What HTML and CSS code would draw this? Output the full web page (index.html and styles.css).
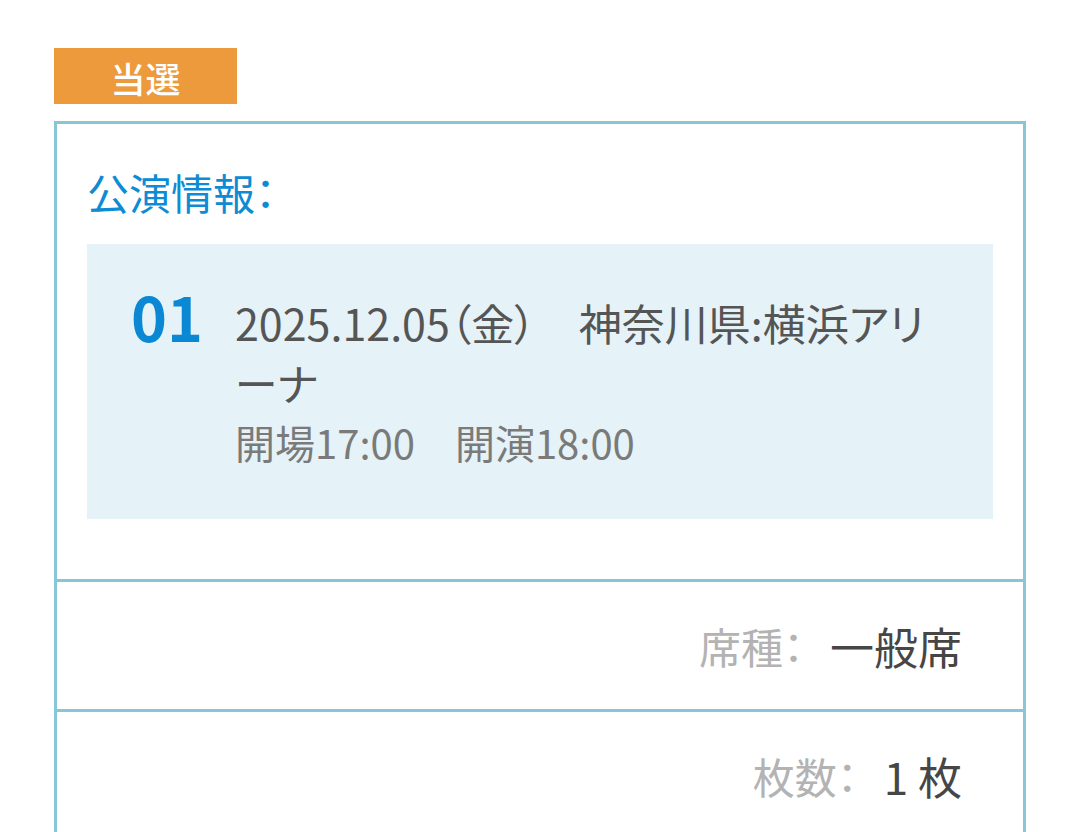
FILE: index.html
```html
<!DOCTYPE html>
<html lang="ja">
<head>
<meta charset="utf-8">
<link rel="stylesheet" href="styles.css">
</head>
<body>
<div class="page">
  <div class="badge">当選</div>
  <div class="card">
    <div class="card-head">
      <h2 class="heading">公演情報：</h2>
      <div class="perf">
        <div class="perf-num">01</div>
        <div class="perf-body">
          <div class="perf-title">2025.12.05（金）　神奈川県:横浜アリーナ</div>
          <div class="perf-time">開場17:00　開演18:00</div>
        </div>
      </div>
    </div>
    <div class="row">
      <span class="row-label">席種：</span>
      <span class="row-value">一般席</span>
    </div>
    <div class="row">
      <span class="row-label">枚数：</span>
      <span class="row-value">1 枚</span>
    </div>
  </div>
</div>
</body>
</html>
```
FILE: styles.css
```css
html, body {
  margin: 0;
  padding: 0;
  background: #ffffff;
}
body {
  font-family: "Noto Sans CJK JP", "Noto Sans", sans-serif;
  font-feature-settings: "palt";
}
.page {
  padding: 48px 54px 0 54px;
}
.badge {
  width: 183px;
  height: 53px;
  padding-top: 3px;
  background: #ec9a3c;
  color: #ffffff;
  font-size: 35px;
  font-weight: 500;
  line-height: 53px;
  text-align: center;
  margin-bottom: 17px;
}
.card {
  border: 3px solid #88c6d6;
}
.card-head {
  padding: 38px 30px 60px 30px;
}
.heading {
  margin: 0 0 22px 0;
  font-size: 42px;
  line-height: 60px;
  font-weight: 400;
  color: #0d8bd3;
}
.perf {
  background: #e5f2f7;
  display: flex;
  align-items: flex-start;
  gap: 32px;
  padding: 48px 55px 47px 44px;
}
.perf-num {
  font-size: 61px;
  line-height: 48px;
  font-weight: 700;
  color: #0a88d4;
  flex: none;
}
.perf-body {
  flex: 1;
  line-height: 60px;
}
.perf-title {
  font-size: 43px;
  color: #555555;
}
.perf-time {
  font-size: 40px;
  color: #7a7a7a;
}
.row {
  border-top: 3px solid #88c6d6;
  height: 127px;
  display: flex;
  justify-content: flex-end;
  align-items: center;
  gap: 26px;
  padding-right: 61px;
  font-size: 44px;
}
.row-label {
  font-size: 42px;
  color: #b3b3b3;
}
.row-value {
  color: #464646;
}
```
